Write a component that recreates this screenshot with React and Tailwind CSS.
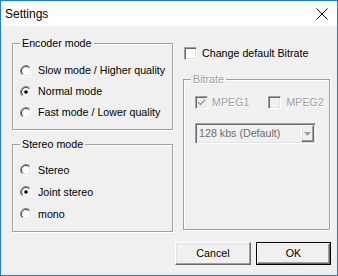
import React from "react";

const sunken =
  "border border-t-[#a0a0a0] border-l-[#a0a0a0] border-r-white border-b-white shadow-[inset_1px_1px_0_#696969,inset_-1px_-1px_0_#e3e3e3]";
const raised =
  "border border-t-white border-l-white border-r-[#696969] border-b-[#696969] shadow-[inset_-1px_-1px_0_#a0a0a0,inset_1px_1px_0_#e3e3e3]";

const Radio = ({ checked }) => (
  <svg width="12" height="12" viewBox="0 0 12 12" className="shrink-0">
    <defs>
      <linearGradient id="rg" x1="0" y1="0" x2="1" y2="1">
        <stop offset="0.45" stopColor="#808080" />
        <stop offset="0.55" stopColor="#ffffff" />
      </linearGradient>
      <linearGradient id="rg2" x1="0" y1="0" x2="1" y2="1">
        <stop offset="0.45" stopColor="#404040" />
        <stop offset="0.55" stopColor="#dfdfdf" />
      </linearGradient>
    </defs>
    <circle cx="6" cy="6" r="5.5" fill="none" stroke="url(#rg)" />
    <circle cx="6" cy="6" r="4.5" fill="#fff" stroke="url(#rg2)" />
    {checked && <circle cx="6" cy="6" r="1.8" fill="#000" />}
  </svg>
);

const RadioRow = ({ label, checked, h }) => (
  <div className={`flex items-center gap-[6px] ${h}`}>
    <Radio checked={checked} />
    <span>{label}</span>
  </div>
);

const Group = ({ title, className, titleClass = "text-black", children }) => (
  <div className={`relative border border-[#a0a0a0] shadow-[inset_1px_1px_0_#fff,1px_1px_0_#fff] ${className}`}>
    <span className={`absolute left-[7px] top-[-8px] bg-[#f0f0f0] px-[2px] leading-[14px] ${titleClass}`}>
      {title}
    </span>
    {children}
  </div>
);

const Check = ({ checked, disabled }) => (
  <div
    className={`flex h-[13px] w-[13px] shrink-0 items-center justify-center ${sunken} ${
      disabled ? "bg-[#f0f0f0]" : "bg-white"
    }`}
  >
    {checked && (
      <svg width="9" height="9" viewBox="0 0 9 9">
        <path d="M1 4 L3.5 6.5 L8 1.5" fill="none" stroke="#a0a0a0" strokeWidth="1.6" />
      </svg>
    )}
  </div>
);

const dis = "text-[#a0a0a0] [text-shadow:1px_1px_0_#fff]";

export default function App() {
  return (
    <div
      className="relative flex h-[276px] w-[338px] flex-col overflow-hidden border border-[#1c7fd6] bg-[#f0f0f0] text-[10.7px] text-black"
      style={{ fontFamily: '"Liberation Sans", Arial, sans-serif' }}
    >
      <div className="flex h-[25px] shrink-0 items-center justify-between bg-white pl-[4px] pr-[9px]">
        <span className="text-[12px]">Settings</span>
        <svg width="12" height="12" viewBox="0 0 12 12">
          <path d="M0.5 0.5 L11.5 11.5 M11.5 0.5 L0.5 11.5" stroke="#000" strokeWidth="1" />
        </svg>
      </div>

      <div className="flex pl-[11px] pt-[17px]">
        <div className="flex w-[161px] flex-col gap-[14px]">
          <Group title="Encoder mode" className="h-[87px] pl-[7px] pt-[16px]">
            <RadioRow label="Slow mode / Higher quality" h="h-[21px]" />
            <RadioRow label="Normal mode" checked h="h-[21px]" />
            <RadioRow label="Fast mode / Lower quality" h="h-[21px]" />
          </Group>
          <Group title="Stereo mode" className="h-[88px] pl-[7px] pt-[14px]">
            <RadioRow label="Stereo" h="h-[22px]" />
            <RadioRow label="Joint stereo" checked h="h-[22px]" />
            <RadioRow label="mono" h="h-[22px]" />
          </Group>
        </div>

        <div className="ml-[10px] flex w-[147px] flex-col">
          <div className="ml-[1px] mt-[4px] flex h-[13px] items-center gap-[5px]">
            <Check />
            <span>Change default Bitrate</span>
          </div>
          <Group title="Bitrate" titleClass={dis} className="mt-[19px] h-[151px] pl-[11px] pt-[16px]">
            <div className="flex h-[13px] items-center">
              <Check checked disabled />
              <span className={`ml-[4px] ${dis}`}>MPEG1</span>
              <div className="ml-[19px]">
                <Check disabled />
              </div>
              <span className={`ml-[5px] ${dis}`}>MPEG2</span>
            </div>
            <div
              className={`mt-[14px] flex h-[21px] w-[121px] items-center justify-between bg-[#f0f0f0] pl-[3px] pr-[1px] ${sunken}`}
            >
              <span className="text-[#6d6d6d]">128 kbs (Default)</span>
              <div className={`flex h-[17px] w-[13px] items-center justify-center bg-[#f0f0f0] ${raised}`}>
                <svg width="7" height="4" viewBox="0 0 7 4">
                  <path d="M0 0 H7 L3.5 4 Z" fill="#a0a0a0" />
                </svg>
              </div>
            </div>
          </Group>
        </div>
      </div>

      <div className="mt-[10px] flex justify-end gap-[5px] pr-[6px]">
        <button className={`flex h-[23px] w-[76px] items-center justify-center bg-[#f0f0f0] ${raised}`}>
          Cancel
        </button>
        <div className="h-[23px] w-[75px] border border-[#000]">
          <button className={`flex h-full w-full items-center justify-center bg-[#f0f0f0] ${raised}`}>
            OK
          </button>
        </div>
      </div>
    </div>
  );
}
